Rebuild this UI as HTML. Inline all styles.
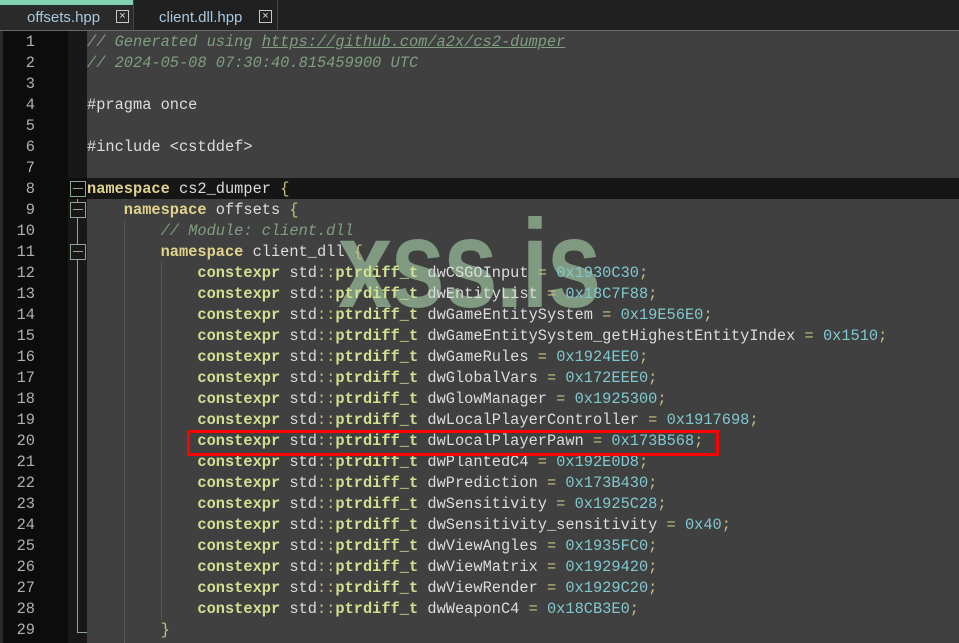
<!DOCTYPE html>
<html><head><style>
body{margin:0;width:959px;height:643px;background:#404040;overflow:hidden;position:relative;font-family:"Liberation Mono",monospace;}
#tabs{position:absolute;left:0;top:0;width:959px;height:30px;background:#202020;border-bottom:1px solid #6a6a6a;}
.tab{position:absolute;top:0;height:30px;font:15px "Liberation Sans",sans-serif;color:#a8c8e0;}
.x{position:absolute;top:10px;width:11px;height:11px;border:1px solid #c8c8c8;color:#ddd;font:11px/11px "Liberation Sans",sans-serif;text-align:center;}
#gut{position:absolute;left:3px;top:31px;width:65px;height:612px;background:#0c0c0c;}
#fold{position:absolute;left:68px;top:31px;width:19px;height:612px;background:#181818;}
#lb{position:absolute;left:0;top:31px;width:3px;height:612px;background:#2a2a2a;}
.ln{position:absolute;left:3px;width:32px;text-align:right;color:#a6a6a6;font-size:15.33px;line-height:21px;}
.code{position:absolute;left:87px;white-space:pre;font-size:15.33px;line-height:21px;color:#dcdcdc;}
.c{color:#7f9f80;font-style:italic}
.k{color:#e2d38c;font-weight:bold}
.t{color:#d0e090;font-weight:bold}
.n{color:#80c8d0}
.p{color:#c8bf80}
#wm{position:absolute;left:338px;top:193px;font:bold 125px "Liberation Sans",sans-serif;color:#7f9a80;transform:scaleX(0.78);transform-origin:left top;letter-spacing:-2px;}
</style></head><body>
<div id="tabs">
<div class="tab" style="left:0;width:133px;background:#2a2a2a;border-right:1px solid #444"><div style="height:5px;background:#7fd1b0"></div><span style="position:absolute;left:27px;top:9px">offsets.hpp</span><div class="x" style="left:116px">×</div></div>
<div class="tab" style="left:134px;width:143px;border-right:1px solid #444"><span style="position:absolute;left:25px;top:9px">client.dll.hpp</span><div class="x" style="left:125px">×</div></div>
</div>
<div id="lb"></div><div id="gut"></div><div id="fold"></div>
<div style="position:absolute;left:87px;top:178px;width:872px;height:21px;background:#161616"></div>
<div style="position:absolute;left:3px;top:178px;width:84px;height:21px;background:#0c0c0c"></div>
<div style="position:absolute;left:77px;top:199px;width:1px;height:434px;background:#8aa890"></div>
<div style="position:absolute;left:77px;top:632px;width:10px;height:1px;background:#8aa890"></div>
<div style="position:absolute;left:70px;top:181px;width:14px;height:14px;border:1px solid #8aa890;background:#0c0c0c"></div>
<div style="position:absolute;left:70px;top:202px;width:14px;height:14px;border:1px solid #8aa890;background:#181818"></div>
<div style="position:absolute;left:70px;top:244px;width:14px;height:14px;border:1px solid #8aa890;background:#181818"></div>
<div style="position:absolute;left:73px;top:188px;width:10px;height:1px;background:#8aa890"></div>
<div style="position:absolute;left:73px;top:209px;width:10px;height:1px;background:#8aa890"></div>
<div style="position:absolute;left:73px;top:251px;width:10px;height:1px;background:#8aa890"></div>
<div style="position:absolute;left:124px;top:220px;height:423px;border-left:1px dotted #607060"></div>
<div style="position:absolute;left:161px;top:262px;height:357px;border-left:1px dotted #607060"></div>
<div id="wm">xss.is</div>
<div class="code" style="top:32px"><span class="c">// Generated using <u>https://github.com/a2x/cs2-dumper</u></span>
<span class="c">// 2024-05-08 07:30:40.815459900 UTC</span>

#pragma once

#include &lt;cstddef&gt;

<span class="k">namespace</span> cs2_dumper <span class="p">{</span>
    <span class="k">namespace</span> offsets <span class="p">{</span>
        <span class="c">// Module: client.dll</span>
        <span class="k">namespace</span> client_dll <span class="p">{</span>
            <span class="t">constexpr</span> std<span class="p">::</span><span class="t">ptrdiff_t</span> dwCSGOInput <span class="p">=</span> <span class="n">0x1930C30</span><span class="p">;</span>
            <span class="t">constexpr</span> std<span class="p">::</span><span class="t">ptrdiff_t</span> dwEntityList <span class="p">=</span> <span class="n">0x18C7F88</span><span class="p">;</span>
            <span class="t">constexpr</span> std<span class="p">::</span><span class="t">ptrdiff_t</span> dwGameEntitySystem <span class="p">=</span> <span class="n">0x19E56E0</span><span class="p">;</span>
            <span class="t">constexpr</span> std<span class="p">::</span><span class="t">ptrdiff_t</span> dwGameEntitySystem_getHighestEntityIndex <span class="p">=</span> <span class="n">0x1510</span><span class="p">;</span>
            <span class="t">constexpr</span> std<span class="p">::</span><span class="t">ptrdiff_t</span> dwGameRules <span class="p">=</span> <span class="n">0x1924EE0</span><span class="p">;</span>
            <span class="t">constexpr</span> std<span class="p">::</span><span class="t">ptrdiff_t</span> dwGlobalVars <span class="p">=</span> <span class="n">0x172EEE0</span><span class="p">;</span>
            <span class="t">constexpr</span> std<span class="p">::</span><span class="t">ptrdiff_t</span> dwGlowManager <span class="p">=</span> <span class="n">0x1925300</span><span class="p">;</span>
            <span class="t">constexpr</span> std<span class="p">::</span><span class="t">ptrdiff_t</span> dwLocalPlayerController <span class="p">=</span> <span class="n">0x1917698</span><span class="p">;</span>
            <span class="t">constexpr</span> std<span class="p">::</span><span class="t">ptrdiff_t</span> dwLocalPlayerPawn <span class="p">=</span> <span class="n">0x173B568</span><span class="p">;</span>
            <span class="t">constexpr</span> std<span class="p">::</span><span class="t">ptrdiff_t</span> dwPlantedC4 <span class="p">=</span> <span class="n">0x192E0D8</span><span class="p">;</span>
            <span class="t">constexpr</span> std<span class="p">::</span><span class="t">ptrdiff_t</span> dwPrediction <span class="p">=</span> <span class="n">0x173B430</span><span class="p">;</span>
            <span class="t">constexpr</span> std<span class="p">::</span><span class="t">ptrdiff_t</span> dwSensitivity <span class="p">=</span> <span class="n">0x1925C28</span><span class="p">;</span>
            <span class="t">constexpr</span> std<span class="p">::</span><span class="t">ptrdiff_t</span> dwSensitivity_sensitivity <span class="p">=</span> <span class="n">0x40</span><span class="p">;</span>
            <span class="t">constexpr</span> std<span class="p">::</span><span class="t">ptrdiff_t</span> dwViewAngles <span class="p">=</span> <span class="n">0x1935FC0</span><span class="p">;</span>
            <span class="t">constexpr</span> std<span class="p">::</span><span class="t">ptrdiff_t</span> dwViewMatrix <span class="p">=</span> <span class="n">0x1929420</span><span class="p">;</span>
            <span class="t">constexpr</span> std<span class="p">::</span><span class="t">ptrdiff_t</span> dwViewRender <span class="p">=</span> <span class="n">0x1929C20</span><span class="p">;</span>
            <span class="t">constexpr</span> std<span class="p">::</span><span class="t">ptrdiff_t</span> dwWeaponC4 <span class="p">=</span> <span class="n">0x18CB3E0</span><span class="p">;</span>
        <span class="p">}</span></div>
<div class="ln" style="top:32px;color:#b0b0b0">1<br>2<br>3<br>4<br>5<br>6<br>7<br>8<br>9<br>10<br>11<br>12<br>13<br>14<br>15<br>16<br>17<br>18<br>19<br>20<br>21<br>22<br>23<br>24<br>25<br>26<br>27<br>28<br>29</div>
<div style="position:absolute;left:187px;top:430px;width:526px;height:20px;border:3px solid #ff0000;"></div>
</body></html>
